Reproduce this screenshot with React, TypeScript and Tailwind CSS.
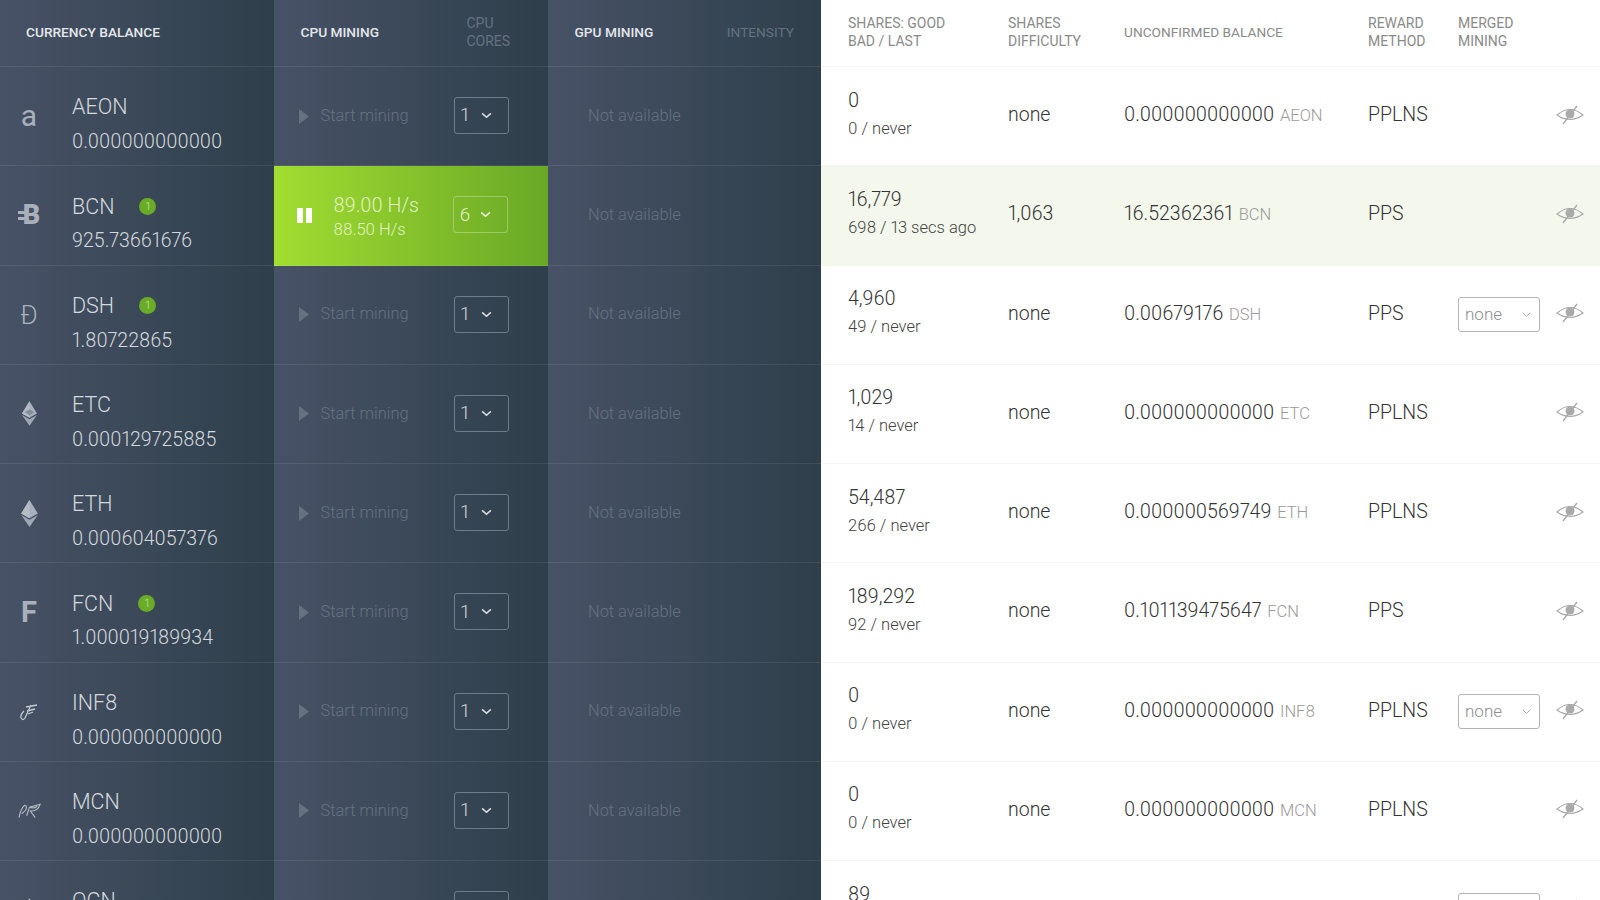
import type { ReactNode } from 'react'

interface Coin {
  id: string
  balance: string
  badge?: boolean
  shares: string
  last: string
  difficulty: string
  unconfirmed: string
  method: string
  merged?: boolean
  mining?: boolean
  cores: string
}

const COINS: Coin[] = [
  { id: 'AEON', balance: '0.000000000000', shares: '0', last: '0 / never', difficulty: 'none', unconfirmed: '0.000000000000', method: 'PPLNS', cores: '1' },
  { id: 'BCN', balance: '925.73661676', badge: true, shares: '16,779', last: '698 / 13 secs ago', difficulty: '1,063', unconfirmed: '16.52362361', method: 'PPS', mining: true, cores: '6' },
  { id: 'DSH', balance: '1.80722865', badge: true, shares: '4,960', last: '49 / never', difficulty: 'none', unconfirmed: '0.00679176', method: 'PPS', merged: true, cores: '1' },
  { id: 'ETC', balance: '0.000129725885', shares: '1,029', last: '14 / never', difficulty: 'none', unconfirmed: '0.000000000000', method: 'PPLNS', cores: '1' },
  { id: 'ETH', balance: '0.000604057376', shares: '54,487', last: '266 / never', difficulty: 'none', unconfirmed: '0.000000569749', method: 'PPLNS', cores: '1' },
  { id: 'FCN', balance: '1.000019189934', badge: true, shares: '189,292', last: '92 / never', difficulty: 'none', unconfirmed: '0.101139475647', method: 'PPS', cores: '1' },
  { id: 'INF8', balance: '0.000000000000', shares: '0', last: '0 / never', difficulty: 'none', unconfirmed: '0.000000000000', method: 'PPLNS', merged: true, cores: '1' },
  { id: 'MCN', balance: '0.000000000000', shares: '0', last: '0 / never', difficulty: 'none', unconfirmed: '0.000000000000', method: 'PPLNS', cores: '1' },
  { id: 'OCN', balance: '0.000000000000', shares: '89', last: '0 / never', difficulty: 'none', unconfirmed: '0.000000000000', method: 'PPLNS', merged: true, cores: '1' },
]

const DARK_COL = 'bg-gradient-to-r from-[#475266] to-[#2e3f4b]'
const SEP = 'border-b border-white/[0.08]'

function Diamond({ small }: { small?: boolean }) {
  const s = small ? 'w-[15px] h-[25px]' : 'w-[17px] h-[27px]'
  return (
    <svg viewBox="0 0 16 26" className={s}>
      <polygon points="8,0 16,13 8,17.5 0,13" fill="#a9b0bb" />
      <polygon points="8,0 8,17.5 0,13" fill="#b6bcc6" />
      <polygon points="0,14.5 8,19 16,14.5 8,26" fill="#9fa7b3" />
      {small && <polygon points="3,11.5 8,8.5 13,11.5 8,15" fill="#858e9b" />}
    </svg>
  )
}

function CoinIcon({ id }: { id: string }) {
  let icon: ReactNode = null
  if (id === 'AEON') icon = <span className="text-[30px] font-normal leading-none">a</span>
  if (id === 'BCN') {
    icon = (
      <span className="relative text-[27px] font-black leading-none pl-[5px]">
        B
        <span className="absolute left-0 top-[9px] w-[7px] h-[3px] bg-[#a9b0bb]" />
        <span className="absolute left-0 top-[15px] w-[7px] h-[3px] bg-[#a9b0bb]" />
      </span>
    )
  }
  if (id === 'DSH') icon = <span className="text-[26px] font-light leading-none">Ð</span>
  if (id === 'ETC') icon = <Diamond small />
  if (id === 'ETH') icon = <Diamond />
  if (id === 'FCN') icon = <span className="text-[29px] font-bold leading-none">F</span>
  if (id === 'INF8') {
    icon = (
      <svg viewBox="0 0 20 20" className="w-[20px] h-[20px]" fill="none" stroke="#c3c8d0" strokeWidth="1.3">
        <path d="M7 5 L18 3 M8 9 L16 7 M12 3 L6 16 Q4 19 2 16 Q1 13 5 9 M9 12 L14 10" />
      </svg>
    )
  }
  if (id === 'MCN') {
    icon = (
      <svg viewBox="0 0 24 18" className="w-[23px] h-[18px]" fill="none" stroke="#b4bac4" strokeWidth="1.2">
        <path d="M1 16 Q3 6 7 3 Q10 3 8 8 L4 12 M9 14 L12 5 L23 2 Q21 9 13 9 L18 16 M12 5 Q16 7 20 4" />
      </svg>
    )
  }
  if (id === 'OCN') icon = <Diamond small />
  return <div className="w-[30px] flex justify-center text-[#a9b0bb] shrink-0">{icon}</div>
}

function CoresSelect({ value, active }: { value: string; active?: boolean }) {
  return (
    <div className={`w-[55px] h-[37px] mb-[1px] rounded-[3px] border flex items-center pl-[6px] text-[19px] font-light ${active ? 'border-white/30 text-[#e2f3c4]' : 'border-[#717c8b] text-[#cfd4da]'}`}>
      <span className="w-[20px]">{value}</span>
      <svg viewBox="0 0 12 8" className="w-[11px] h-[7px]" fill="none" stroke={active ? '#eef7dc' : '#d9dde2'} strokeWidth="1.8">
        <path d="M1 1.5 L6 6 L11 1.5" />
      </svg>
    </div>
  )
}

function MergedSelect() {
  return (
    <div className="w-[82px] h-[35px] mt-[3px] rounded-[3px] border border-[#b5b5b5] flex items-center justify-between pl-[6px] pr-[7px] text-[17px] font-light text-[#8d8f93]">
      none
      <svg viewBox="0 0 12 8" className="w-[11px] h-[6px]" fill="none" stroke="#a5a5a5" strokeWidth="1.2">
        <path d="M1 1 L6 6 L11 1" />
      </svg>
    </div>
  )
}

function EyeOff() {
  return (
    <svg viewBox="0 0 28 20" className="w-[28px] h-[20px]" fill="none" stroke="#a8a8a8" strokeWidth="1.1">
      <path d="M1 10 Q14 -1 27 10 Q14 19 1 10 Z" />
      <circle cx="14" cy="9" r="4.5" fill="#ababab" stroke="none" />
      <path d="M21 1 L7 19" stroke="#a8a8a8" strokeWidth="1.3" />
    </svg>
  )
}

function Row({ coin }: { coin: Coin }) {
  return (
    <div className="flex h-[99.25px] shrink-0">
      <div className={`w-[273.5px] shrink-0 flex items-center pl-[14px] ${DARK_COL} ${SEP}`}>
        <CoinIcon id={coin.id} />
        <div className="ml-[28px] pt-[17px] text-[#d5d9de] font-light">
          <div className="flex items-center h-[24px] text-[21.5px] leading-none">
            {coin.id}
            {coin.badge && (
              <span className="ml-[25px] w-[17px] h-[17px] rounded-full bg-[#6aab27] text-[#c8e6a0] text-[11px] flex items-center justify-center">1</span>
            )}
          </div>
          <div className="mt-[11px] text-[19.5px] leading-6">{coin.balance}</div>
        </div>
      </div>
      {coin.mining ? (
        <div className={`w-[274px] shrink-0 flex items-center bg-gradient-to-r from-[#a2dd31] to-[#69a826] ${SEP}`}>
          <div className="ml-[23px] flex gap-[3px]">
            <span className="w-[6px] h-[15px] bg-white" />
            <span className="w-[6px] h-[15px] bg-white" />
          </div>
          <div className="ml-[22px] pt-[5px] w-[119px] text-[#e2f3c4] font-light">
            <div className="text-[19.5px] leading-6">89.00 H/s</div>
            <div className="text-[16.5px] leading-[24px]">88.50 H/s</div>
          </div>
          <CoresSelect value={coin.cores} active />
        </div>
      ) : (
        <div className={`w-[274px] shrink-0 flex items-center ${DARK_COL} ${SEP}`}>
          <svg viewBox="0 0 10 15" className="ml-[25px] w-[10px] h-[15px]">
            <polygon points="0,0 10,7.5 0,15" fill="#667180" />
          </svg>
          <span className="ml-[12px] w-[133px] text-[16.4px] font-light text-[#667180]">Start mining</span>
          <CoresSelect value={coin.cores} />
        </div>
      )}
      <div className={`w-[273.5px] shrink-0 flex items-center pl-[40.5px] text-[16.4px] font-light text-[#667180] ${DARK_COL} ${SEP}`}>
        Not available
      </div>
      <div className={`flex-1 grid grid-cols-[160px_116px_244px_90px_98px_1fr] items-center pl-[27px] pb-[3px] font-light text-[#333] border-b ${coin.mining ? 'bg-[#f3f7ec] border-[#f3f7ec]' : 'bg-white border-[#f6f6f6]'}`}>
        <div>
          <div className="text-[19.5px] leading-6">{coin.shares}</div>
          <div className="mt-[4px] text-[16.5px] leading-6 text-[#444]">{coin.last}</div>
        </div>
        <div className="text-[19.5px]">{coin.difficulty}</div>
        <div className="text-[19.5px]">
          {coin.unconfirmed} <span className="ml-[1px] text-[16.5px] text-[#9a9a9a]">{coin.id}</span>
        </div>
        <div className="text-[19.5px]">{coin.method}</div>
        <div>{coin.merged && <MergedSelect />}</div>
        <EyeOff />
      </div>
    </div>
  )
}

export default function App() {
  return (
    <div className="w-[1600px] h-[900px] overflow-hidden flex flex-col bg-white font-['Roboto',sans-serif] proportional-nums">
      <div className="flex h-[67px] shrink-0 text-[14px] leading-[18px] uppercase">
        <div className={`w-[273.5px] shrink-0 flex items-center pl-[26px] pb-[2px] text-[13.7px] text-[#e4e7ea] font-medium ${DARK_COL} ${SEP}`}>
          Currency balance
        </div>
        <div className={`w-[274px] shrink-0 flex items-center justify-between pl-[27px] pb-[2px] ${DARK_COL} ${SEP}`}>
          <span className="text-[13.7px] text-[#e4e7ea] font-medium">CPU mining</span>
          <span className="w-[81px] text-[#667180]">CPU<br />cores</span>
        </div>
        <div className={`w-[273.5px] shrink-0 flex items-center justify-between pl-[27px] pr-[27px] pb-[2px] ${DARK_COL} ${SEP}`}>
          <span className="text-[13.7px] text-[#e4e7ea] font-medium">GPU mining</span>
          <span className="text-[13.7px] text-[#667180]">Intensity</span>
        </div>
        <div className="flex-1 grid grid-cols-[160px_116px_244px_90px_1fr] items-center pl-[27px] pb-[3px] text-[#8a8a8a] border-b border-[#f6f6f6]">
          <span>Shares: good<br />bad / last</span>
          <span>Shares<br />difficulty</span>
          <span className="text-[13.7px]">Unconfirmed balance</span>
          <span>Reward<br />method</span>
          <span>Merged<br />mining</span>
        </div>
      </div>
      {COINS.map((c) => (
        <Row key={c.id} coin={c} />
      ))}
    </div>
  )
}
